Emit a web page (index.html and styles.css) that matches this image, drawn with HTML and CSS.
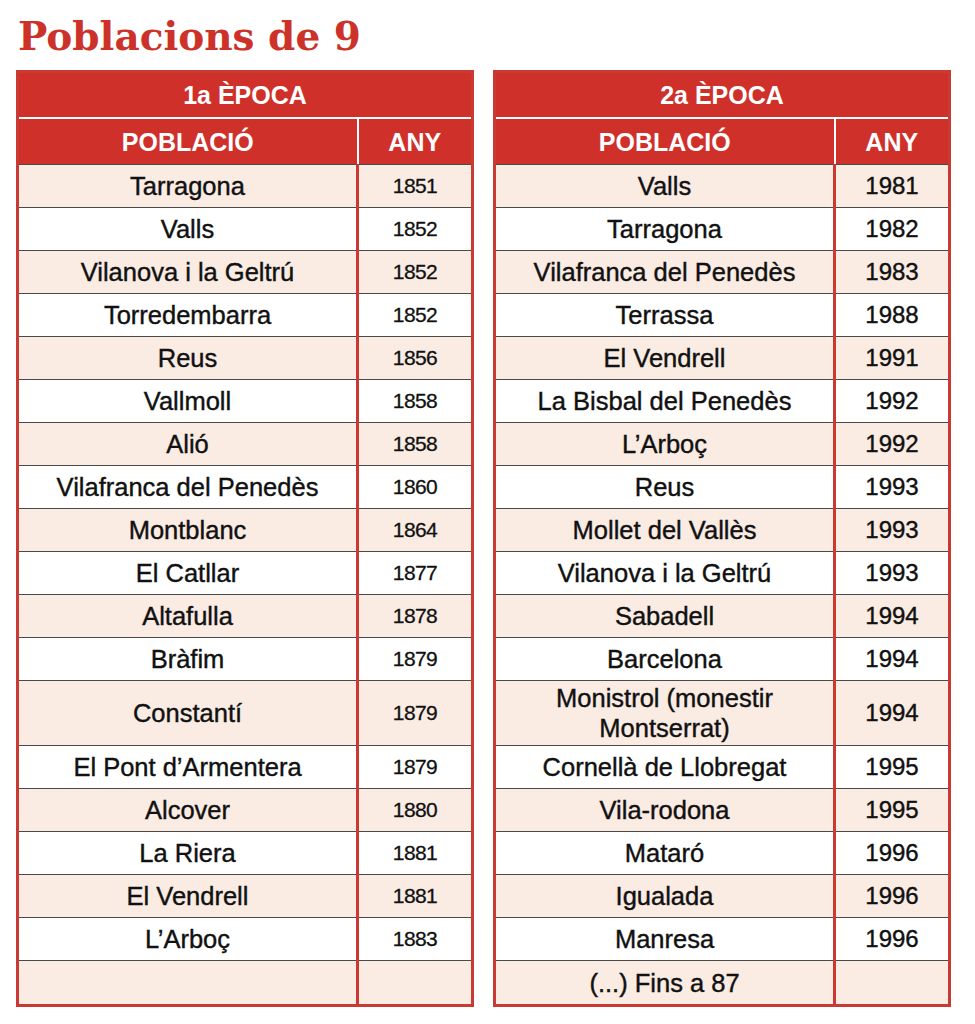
FILE: index.html
```html
<!DOCTYPE html>
<html lang="ca">
<head>
<meta charset="utf-8">
<title>Poblacions de 9</title>
<link rel="stylesheet" href="styles.css">
</head>
<body>
<div class="page">
  <h1 class="title">Poblacions de 9</h1>
  <div class="tables">
    <table class="epoca epoca-1">
      <colgroup><col class="c-name"><col class="c-year"></colgroup>
      <thead>
        <tr><th colspan="2" class="cap">1a ÈPOCA</th></tr>
        <tr><th class="h-name">POBLACIÓ</th><th class="h-year">ANY</th></tr>
      </thead>
      <tbody>
        <tr><td class="name">Tarragona</td><td class="year">1851</td></tr>
        <tr><td class="name">Valls</td><td class="year">1852</td></tr>
        <tr><td class="name">Vilanova i la Geltrú</td><td class="year">1852</td></tr>
        <tr><td class="name">Torredembarra</td><td class="year">1852</td></tr>
        <tr><td class="name">Reus</td><td class="year">1856</td></tr>
        <tr><td class="name">Vallmoll</td><td class="year">1858</td></tr>
        <tr><td class="name">Alió</td><td class="year">1858</td></tr>
        <tr><td class="name">Vilafranca del Penedès</td><td class="year">1860</td></tr>
        <tr><td class="name">Montblanc</td><td class="year">1864</td></tr>
        <tr><td class="name">El Catllar</td><td class="year">1877</td></tr>
        <tr><td class="name">Altafulla</td><td class="year">1878</td></tr>
        <tr><td class="name">Bràfim</td><td class="year">1879</td></tr>
        <tr class="tall"><td class="name">Constantí</td><td class="year">1879</td></tr>
        <tr><td class="name">El Pont d’Armentera</td><td class="year">1879</td></tr>
        <tr><td class="name">Alcover</td><td class="year">1880</td></tr>
        <tr><td class="name">La Riera</td><td class="year">1881</td></tr>
        <tr><td class="name">El Vendrell</td><td class="year">1881</td></tr>
        <tr><td class="name">L’Arboç</td><td class="year">1883</td></tr>
        <tr><td class="name"></td><td class="year"></td></tr>
      </tbody>
    </table>
    <table class="epoca epoca-2">
      <colgroup><col class="c-name"><col class="c-year"></colgroup>
      <thead>
        <tr><th colspan="2" class="cap">2a ÈPOCA</th></tr>
        <tr><th class="h-name">POBLACIÓ</th><th class="h-year">ANY</th></tr>
      </thead>
      <tbody>
        <tr><td class="name">Valls</td><td class="year">1981</td></tr>
        <tr><td class="name">Tarragona</td><td class="year">1982</td></tr>
        <tr><td class="name">Vilafranca del Penedès</td><td class="year">1983</td></tr>
        <tr><td class="name">Terrassa</td><td class="year">1988</td></tr>
        <tr><td class="name">El Vendrell</td><td class="year">1991</td></tr>
        <tr><td class="name">La Bisbal del Penedès</td><td class="year">1992</td></tr>
        <tr><td class="name">L’Arboç</td><td class="year">1992</td></tr>
        <tr><td class="name">Reus</td><td class="year">1993</td></tr>
        <tr><td class="name">Mollet del Vallès</td><td class="year">1993</td></tr>
        <tr><td class="name">Vilanova i la Geltrú</td><td class="year">1993</td></tr>
        <tr><td class="name">Sabadell</td><td class="year">1994</td></tr>
        <tr><td class="name">Barcelona</td><td class="year">1994</td></tr>
        <tr class="tall"><td class="name">Monistrol (monestir<br>Montserrat)</td><td class="year">1994</td></tr>
        <tr><td class="name">Cornellà de Llobregat</td><td class="year">1995</td></tr>
        <tr><td class="name">Vila-rodona</td><td class="year">1995</td></tr>
        <tr><td class="name">Mataró</td><td class="year">1996</td></tr>
        <tr><td class="name">Igualada</td><td class="year">1996</td></tr>
        <tr><td class="name">Manresa</td><td class="year">1996</td></tr>
        <tr><td class="name">(...) Fins a 87</td><td class="year"></td></tr>
      </tbody>
    </table>
  </div>
</div>
</body>
</html>
```

FILE: styles.css
```css
html, body {
  margin: 0;
  padding: 0;
  background: #ffffff;
}

.page {
  padding: 0 0 0 16px;
  font-family: "Liberation Sans", Arial, sans-serif;
  color: #111111;
}

.title {
  margin: 0;
  padding: 13px 0 0 2px;
  height: 70px;
  box-sizing: border-box;
  font-family: "DejaVu Serif", "Liberation Serif", serif;
  font-weight: bold;
  font-size: 39px;
  line-height: 46px;
  color: #cc3229;
}

.tables {
  display: flex;
  gap: 19px;
}

.epoca {
  width: 458px;
  border-collapse: collapse;
  border: 3px solid #c83a32;
  table-layout: fixed;
}

.c-name {
  width: 340px;
}

.epoca th {
  background: #d0302a;
  color: #ffffff;
  font-weight: bold;
  font-size: 25px;
  line-height: 28px;
  padding: 0;
  text-align: center;
}

.epoca .cap {
  height: 44px;
  border-bottom: 2px solid #ffffff;
}

.epoca .h-name {
  height: 45px;
  border-right: 2px solid #ffffff;
}

.epoca td {
  height: 42px;
  padding: 0 4px;
  text-align: center;
  vertical-align: middle;
  font-size: 25.5px;
  line-height: 30px;
  border-top: 1px solid #4a4a4a;
  -webkit-text-stroke: 0.4px #111111;
}

.epoca td.name {
  border-right: 3px solid #c83a32;
}

.epoca tbody tr:nth-child(odd) td {
  background: #faebe3;
}

.epoca tbody tr:nth-child(even) td {
  background: #ffffff;
}

.epoca tbody tr.tall td {
  height: 64px;
}

.epoca tbody tr:last-child td {
  height: 43px;
}

.epoca td.year {
  font-size: 24px;
}

.epoca-1 td.year {
  font-size: 21px;
  letter-spacing: -0.6px;
  -webkit-text-stroke: 0.3px #111111;
}
```
